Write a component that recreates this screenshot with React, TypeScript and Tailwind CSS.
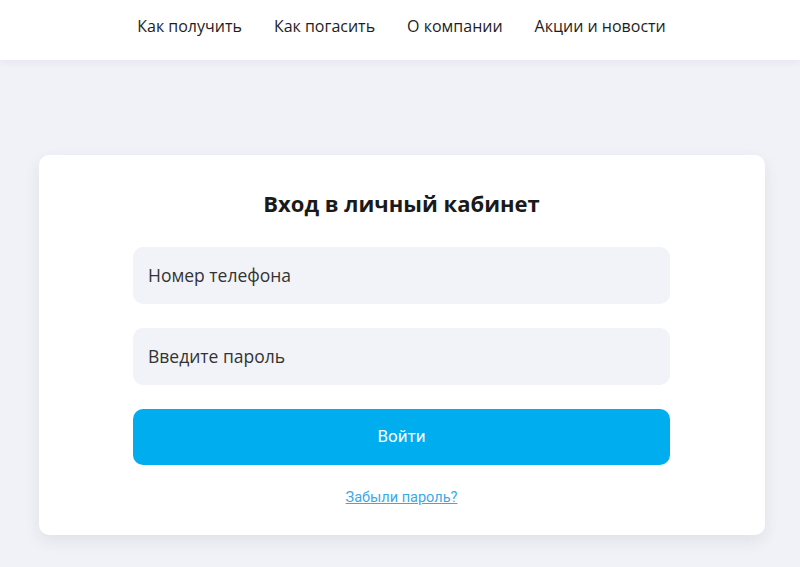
export default function App() {
  const nav = ["Как получить", "Как погасить", "О компании", "Акции и новости"];
  return (
    <div className="min-h-[567px] bg-[#f1f2f7] flex flex-col" style={{ fontFamily: "'Open Sans', sans-serif" }}>
      <header className="h-[60px] bg-white shadow-[0_2px_8px_rgba(30,40,80,0.06)] flex items-center justify-center">
        <nav className="flex gap-[32px] pl-[3px] pb-[8px] text-[16px] text-[#1e1e1e]">
          {nav.map((n) => (
            <span key={n}>{n}</span>
          ))}
        </nav>
      </header>
      <main className="flex justify-center pt-[95px]">
        <div className="w-[726px] ml-[3px] h-[380px] bg-white rounded-[10px] shadow-[0_6px_16px_rgba(30,40,80,0.08)] flex flex-col items-center pt-[33px]">
          <h1 className="text-[22px] font-bold text-[#1a1a1a] leading-[30px]">Вход в личный кабинет</h1>
          <div className="w-[537px] flex flex-col mt-[29px] gap-[24px]">
            <div className="h-[57px] rounded-[10px] bg-[#f2f3f8] flex items-center px-[15px] text-[17.5px] text-[#333]">Номер телефона</div>
            <div className="h-[57px] rounded-[10px] bg-[#f2f3f8] flex items-center px-[15px] text-[17.5px] text-[#333]">Введите пароль</div>
            <button className="h-[56px] rounded-[10px] bg-[#00aeef] text-white text-[17px]" style={{ fontFamily: "Roboto, sans-serif" }}>Войти</button>
          </div>
          <a className="mt-[22px] text-[14.5px] text-[#3aa9e8] underline" style={{ fontFamily: "Roboto, sans-serif" }}>Забыли пароль?</a>
        </div>
      </main>
    </div>
  );
}
